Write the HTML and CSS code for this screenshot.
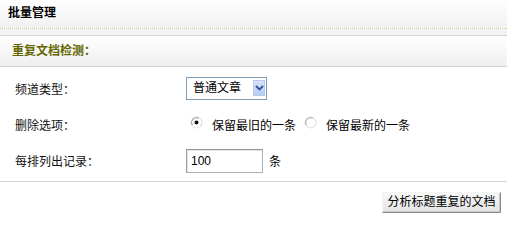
FILE: index.html
```html
<!DOCTYPE html>
<html lang="zh-CN">
<head>
<meta charset="utf-8">
<title>批量管理</title>
<link rel="stylesheet" href="styles.css">
</head>
<body>
<div class="page">
  <div class="head">批量管理</div>
  <div class="gap"></div>
  <div class="section">重复文档检测：</div>
  <div class="form">
    <div class="row">
      <div class="label">频道类型：</div>
      <div class="value">
        <div class="select">
          <span class="select-text">普通文章</span>
          <span class="select-btn">
            <svg width="9" height="6" viewBox="0 0 9 6"><path d="M1 1 L4.5 4.5 L8 1" fill="none" stroke="#2f4f9f" stroke-width="1.8"/></svg>
          </span>
        </div>
      </div>
    </div>
    <div class="row">
      <div class="label">删除选项：</div>
      <div class="value">
        <span class="radio first">
          <svg width="13" height="13" viewBox="0 0 13 13"><circle cx="6.5" cy="6.5" r="5.5" fill="#fff" stroke="#e2e2e2" stroke-width="1.2"/><path d="M2.2 9 A5 5 0 0 1 9 2.2" fill="none" stroke="#9a9a9a" stroke-width="1"/><circle cx="6.5" cy="6.5" r="2" fill="#111"/></svg>
        </span>
        <span class="radio-text">保留最旧的一条</span>
        <span class="radio">
          <svg width="13" height="13" viewBox="0 0 13 13"><circle cx="6.5" cy="6.5" r="5.5" fill="#fff" stroke="#e4e4e4" stroke-width="1.2"/><path d="M2.2 9 A5 5 0 0 1 9 2.2" fill="none" stroke="#a8a8a8" stroke-width="1"/></svg>
        </span>
        <span class="radio-text">保留最新的一条</span>
      </div>
    </div>
    <div class="row">
      <div class="label">每排列出记录：</div>
      <div class="value">
        <div class="input">100</div>
        <span class="unit">条</span>
      </div>
    </div>
  </div>
  <div class="actions">
    <button class="btn" type="button">分析标题重复的文档</button>
  </div>
</div>
</body>
</html>
```

FILE: styles.css
```css
html, body {
  margin: 0;
  padding: 0;
  background: #ffffff;
}
.page {
  width: 507px;
  font-family: "Liberation Sans", "Noto Sans CJK SC", sans-serif;
  font-size: 12px;
  color: #000;
}
.head {
  height: 28px;
  line-height: 27px;
  padding-left: 8px;
  font-weight: bold;
  background: linear-gradient(#ffffff, #f1f1f1);
  border-bottom: 1px dotted #c4c98e;
}
.gap {
  height: 6px;
  background: #f3f3f3;
  border-bottom: 1px solid #d2d2d2;
}
.section {
  height: 30px;
  line-height: 30px;
  padding-left: 12px;
  font-weight: bold;
  color: #666600;
  background: linear-gradient(#ffffff, #efefef);
  border-bottom: 1px solid #d2d2d2;
}
.form {
  padding: 3px 0 3px 0;
  border-bottom: 1px solid #d4d4d4;
}
.row {
  height: 36px;
  display: flex;
  align-items: center;
}
.label {
  width: 171px;
  padding-left: 15px;
  color: #111;
}
.value {
  display: flex;
  align-items: center;
}
.select {
  height: 21px;
  border: 1px solid #7f9db9;
  display: flex;
  align-items: center;
  justify-content: space-between;
  padding-left: 6px;
  padding-right: 1px;
  width: 72px;
}
.select-text {
  line-height: 21px;
}
.select-btn {
  width: 12px;
  height: 16px;
  background: linear-gradient(#d6e2fb, #b9cdf5);
  border: 1px solid #b8c9ee;
  display: flex;
  align-items: center;
  justify-content: center;
  box-sizing: border-box;
}
.radio {
  width: 13px;
  height: 13px;
  margin-left: 8px;
  display: inline-flex;
  margin-top: -3px;
}
.radio.first {
  margin-left: 4px;
}
.radio-text {
  margin-left: 9px;
}
.input {
  width: 71px;
  height: 22px;
  line-height: 22px;
  padding-left: 4px;
  border: 1px solid #a9b0b8;
  border-top-color: #8f959c;
  border-left-color: #979ea5;
  box-shadow: inset 1px 1px 0 #e6e6e6;
  margin-top: 2px;
}
.unit {
  margin-left: 6px;
}
.actions {
  display: flex;
  justify-content: flex-end;
  padding: 10px 6px 0 0;
}
.btn {
  font-family: "Liberation Sans", "Noto Sans CJK SC", sans-serif;
  font-size: 12px;
  color: #000;
  height: 21px;
  width: 119px;
  padding: 0;
  background: linear-gradient(#f8f8f8, #e4e4e4);
  border: 1px solid;
  border-color: #f4f4f4 #8a8a8a #8a8a8a #f4f4f4;
  box-shadow: inset -1px -1px 0 #c8c8c8;
  line-height: 19px;
}
```
